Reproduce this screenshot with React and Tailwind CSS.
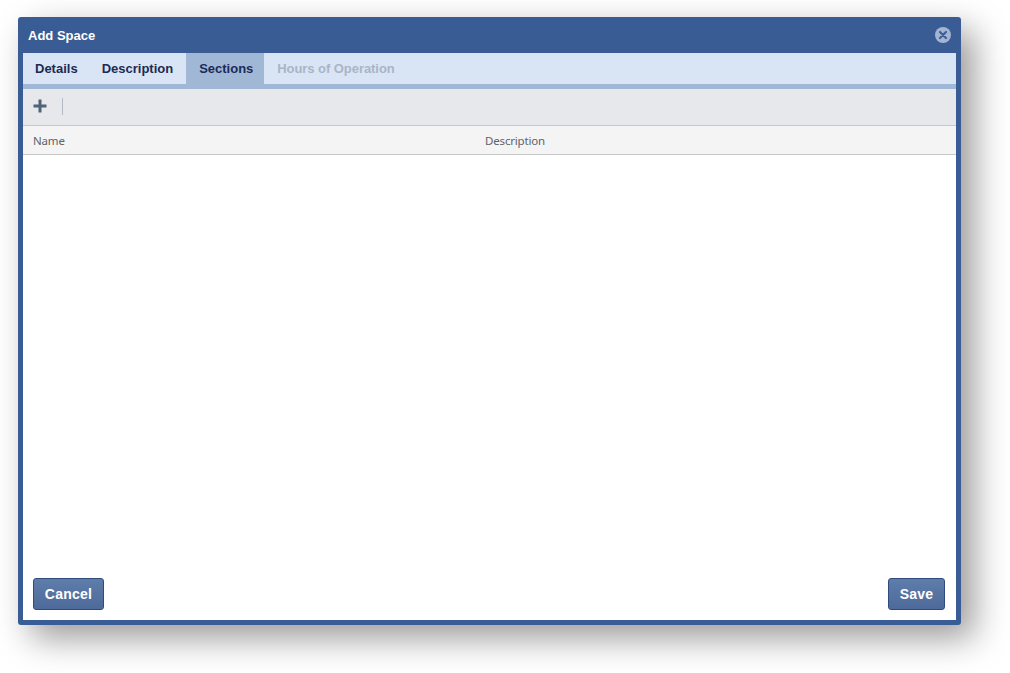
import React from "react";

const tabs = [
  { label: "Details", className: "pl-3 pr-3 text-[#1d2a56]" },
  { label: "Description", className: "pl-3 pr-[13px] text-[#1d2a56]" },
  { label: "Sections", className: "w-[78px] pl-[13px] text-[#1d2a56] bg-[#a0b8d6]" },
  { label: "Hours of Operation", className: "pl-[13px] tracking-[-0.05px] text-[#aab4c8]" },
];

function FooterButton({ label, width }) {
  return (
    <button
      className={`${width} h-8 rounded-[3px] border border-[#2f4a7c] bg-gradient-to-b from-[#5f7daa] to-[#4d6a9a] text-[14px] font-bold tracking-[0.25px] text-white`}
    >
      {label}
    </button>
  );
}

export default function App() {
  return (
    <div className="h-[673px] w-[1010px] bg-white pl-[18px] pt-[17px] font-['Liberation_Sans',Arial,sans-serif]">
      <div className="flex h-[608px] w-[943px] flex-col rounded-[3px] bg-[#3a5c95] px-[5px] pb-[5px] shadow-[13px_13px_34px_rgba(0,0,0,0.4)]">
        {/* title bar */}
        <div className="flex h-9 shrink-0 items-center justify-between pl-[5px] pr-[5px]">
          <span className="pt-px text-[13px] font-bold text-white">Add Space</span>
          <svg width="16" height="16" viewBox="0 0 16 16">
            <circle cx="8" cy="8" r="8" fill="#a3b5d2" />
            <path d="M5 5l6 6M11 5l-6 6" stroke="#3f5f97" strokeWidth="2.2" strokeLinecap="round" />
          </svg>
        </div>

        {/* tabs */}
        <div className="flex h-9 shrink-0 border-b-[5px] border-[#a0b8d6] bg-[#d9e5f4] text-[13px] font-bold">
          {tabs.map((t) => (
            <div key={t.label} className={`flex h-9 items-center pb-[5px] ${t.className}`}>
              {t.label}
            </div>
          ))}
        </div>

        {/* toolbar */}
        <div className="flex h-[37px] shrink-0 items-center border-b border-[#c8c8c8] bg-[#e7e8ec] pb-[3px] pl-[10px]">
          <svg width="14" height="14" viewBox="0 0 14 14">
            <path d="M7 0.5v13M0.5 7h13" stroke="#4f6377" strokeWidth="3" />
          </svg>
          <div className="ml-[15px] mt-[2px] h-[17px] w-px bg-[#b4bac4]" />
        </div>

        {/* grid header */}
        <div className="flex h-[29px] shrink-0 items-center border-b border-[#c8c8c8] bg-[#f4f4f4] pl-[10px] pt-px font-['Noto_Sans',sans-serif] text-[11.5px] tracking-[-0.17px] text-[#5f6368]">
          <div className="w-[452px]">Name</div>
          <div>Description</div>
        </div>

        {/* body */}
        <div className="flex flex-1 items-end justify-between bg-white px-[10px] pb-[10px] pr-[11px]">
          <FooterButton label="Cancel" width="w-[71px]" />
          <FooterButton label="Save" width="w-[57px]" />
        </div>
      </div>
    </div>
  );
}
